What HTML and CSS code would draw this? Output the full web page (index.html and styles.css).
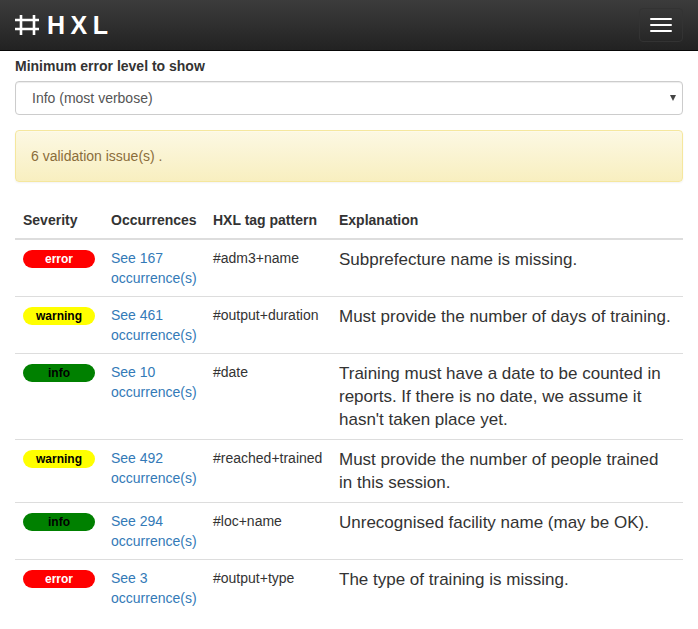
FILE: index.html
```html
<!DOCTYPE html>
<html lang="en">
<head>
<meta charset="utf-8">
<title>HXL validation</title>
<link rel="stylesheet" href="styles.css">
</head>
<body>
<nav class="navbar">
  <a class="brand" href="#">
    <svg class="brand-mark" width="24" height="20" viewBox="0 0 24 20" aria-hidden="true">
      <path d="M0 5H24M0 14H24M6 0V20M19 0V20" fill="none" stroke="#fff" stroke-width="2.6"/>
    </svg>
    <span class="brand-text">HXL</span>
  </a>
  <button class="toggle" type="button" aria-label="Menu">
    <span class="bar"></span><span class="bar"></span><span class="bar"></span>
  </button>
</nav>
<main class="container">
  <form class="form-group">
    <label class="label" for="level">Minimum error level to show</label>
    <div class="select-wrap">
      <select class="select" id="level">
        <option>Info (most verbose)</option>
        <option>Warning</option>
        <option>Error</option>
      </select>
    </div>
  </form>
  <div class="alert">6 validation issue(s) .</div>
  <table class="table">
    <thead>
      <tr><th class="col-sev">Severity</th><th class="col-occ">Occurrences</th><th class="col-tag">HXL tag pattern</th><th>Explanation</th></tr>
    </thead>
    <tbody>
      <tr>
        <td><span class="badge error">error</span></td>
        <td><a href="#">See 167 occurrence(s)</a></td>
        <td>#adm3+name</td>
        <td class="explain">Subprefecture name is missing.</td>
      </tr>
      <tr>
        <td><span class="badge warning">warning</span></td>
        <td><a href="#">See 461 occurrence(s)</a></td>
        <td>#output+duration</td>
        <td class="explain">Must provide the number of days of training.</td>
      </tr>
      <tr>
        <td><span class="badge info">info</span></td>
        <td><a href="#">See 10 occurrence(s)</a></td>
        <td>#date</td>
        <td class="explain">Training must have a date to be counted in reports. If there is no date, we assume it hasn't taken place yet.</td>
      </tr>
      <tr>
        <td><span class="badge warning">warning</span></td>
        <td><a href="#">See 492 occurrence(s)</a></td>
        <td>#reached+trained</td>
        <td class="explain">Must provide the number of people trained in this session.</td>
      </tr>
      <tr>
        <td><span class="badge info">info</span></td>
        <td><a href="#">See 294 occurrence(s)</a></td>
        <td>#loc+name</td>
        <td class="explain">Unrecognised facility name (may be OK).</td>
      </tr>
      <tr>
        <td><span class="badge error">error</span></td>
        <td><a href="#">See 3 occurrence(s)</a></td>
        <td>#output+type</td>
        <td class="explain">The type of training is missing.</td>
      </tr>
    </tbody>
  </table>
</main>
</body>
</html>
```
FILE: styles.css
```css
* { box-sizing: border-box; }
html, body { margin: 0; }
body {
  font-family: "Liberation Sans", Arial, sans-serif;
  font-size: 14px;
  line-height: 20px;
  color: #333;
  background: #fff;
}
.navbar {
  display: flex;
  justify-content: space-between;
  align-items: flex-start;
  height: 51px;
  padding: 0 15px;
  background: linear-gradient(to bottom, #3c3c3c 0, #222 100%);
  border-bottom: 1px solid #080808;
}
.brand {
  display: flex;
  align-items: center;
  gap: 8px;
  height: 50px;
  color: #fff;
  text-decoration: none;
}
.brand-mark { display: block; }
.brand-text {
  font-size: 25px;
  font-weight: 700;
  letter-spacing: 5.5px;
  line-height: 30px;
}
.toggle {
  display: flex;
  flex-direction: column;
  gap: 4px;
  width: 44px;
  height: 34px;
  margin-top: 8px;
  padding: 9px 10px;
  background: transparent;
  border: 1px solid #333;
  border-radius: 4px;
}
.bar {
  display: block;
  width: 22px;
  height: 2px;
  background: #fff;
  border-radius: 1px;
}
.container { padding: 5px 15px 0; }
.form-group { margin: 0 0 15px; }
.label {
  display: block;
  margin-bottom: 5px;
  font-weight: 700;
}
.select-wrap { position: relative; }
.select-wrap::after {
  content: "";
  position: absolute;
  top: 14px;
  right: 7px;
  border-style: solid;
  border-width: 6px 3px 0;
  border-color: #444 transparent transparent;
  pointer-events: none;
}
.select {
  display: block;
  width: 100%;
  height: 34px;
  padding: 6px 12px 6px 16px;
  font: inherit;
  color: #555;
  background: #fff;
  border: 1px solid #ccc;
  border-radius: 4px;
  box-shadow: inset 0 1px 1px rgba(0,0,0,.075);
  appearance: none;
  -webkit-appearance: none;
}
.alert {
  margin-bottom: 20px;
  padding: 15px;
  color: #8a6d3b;
  background: linear-gradient(to bottom, #fcf8e3 0, #f8efc0 100%);
  border: 1px solid #f5e79e;
  border-radius: 4px;
  box-shadow: inset 0 1px 0 rgba(255,255,255,.25), 0 1px 2px rgba(0,0,0,.05);
}
.table {
  width: 100%;
  table-layout: fixed;
  border-collapse: collapse;
  border-spacing: 0;
}
.col-sev { width: 88px; }
.col-occ { width: 102px; }
.col-tag { width: 126px; }
.table th {
  padding: 8px;
  text-align: left;
  vertical-align: bottom;
  white-space: nowrap;
  border-bottom: 2px solid #ddd;
}
.table td {
  padding: 8px;
  vertical-align: top;
  border-top: 1px solid #ddd;
}
.table thead + tbody tr:first-child td { border-top: 0; }
.table a { color: #337ab7; text-decoration: none; }
.table .explain { font-size: 17px; line-height: 23px; }
.badge {
  display: block;
  width: 72px;
  height: 18px;
  margin-top: 2px;
  font-size: 12px;
  font-weight: 700;
  line-height: 18px;
  text-align: center;
  color: #000;
  border-radius: 9px;
}
.badge.error { color: #fff; background: #f00; }
.badge.warning { background: #ff0; }
.badge.info { background: #008000; }
```
